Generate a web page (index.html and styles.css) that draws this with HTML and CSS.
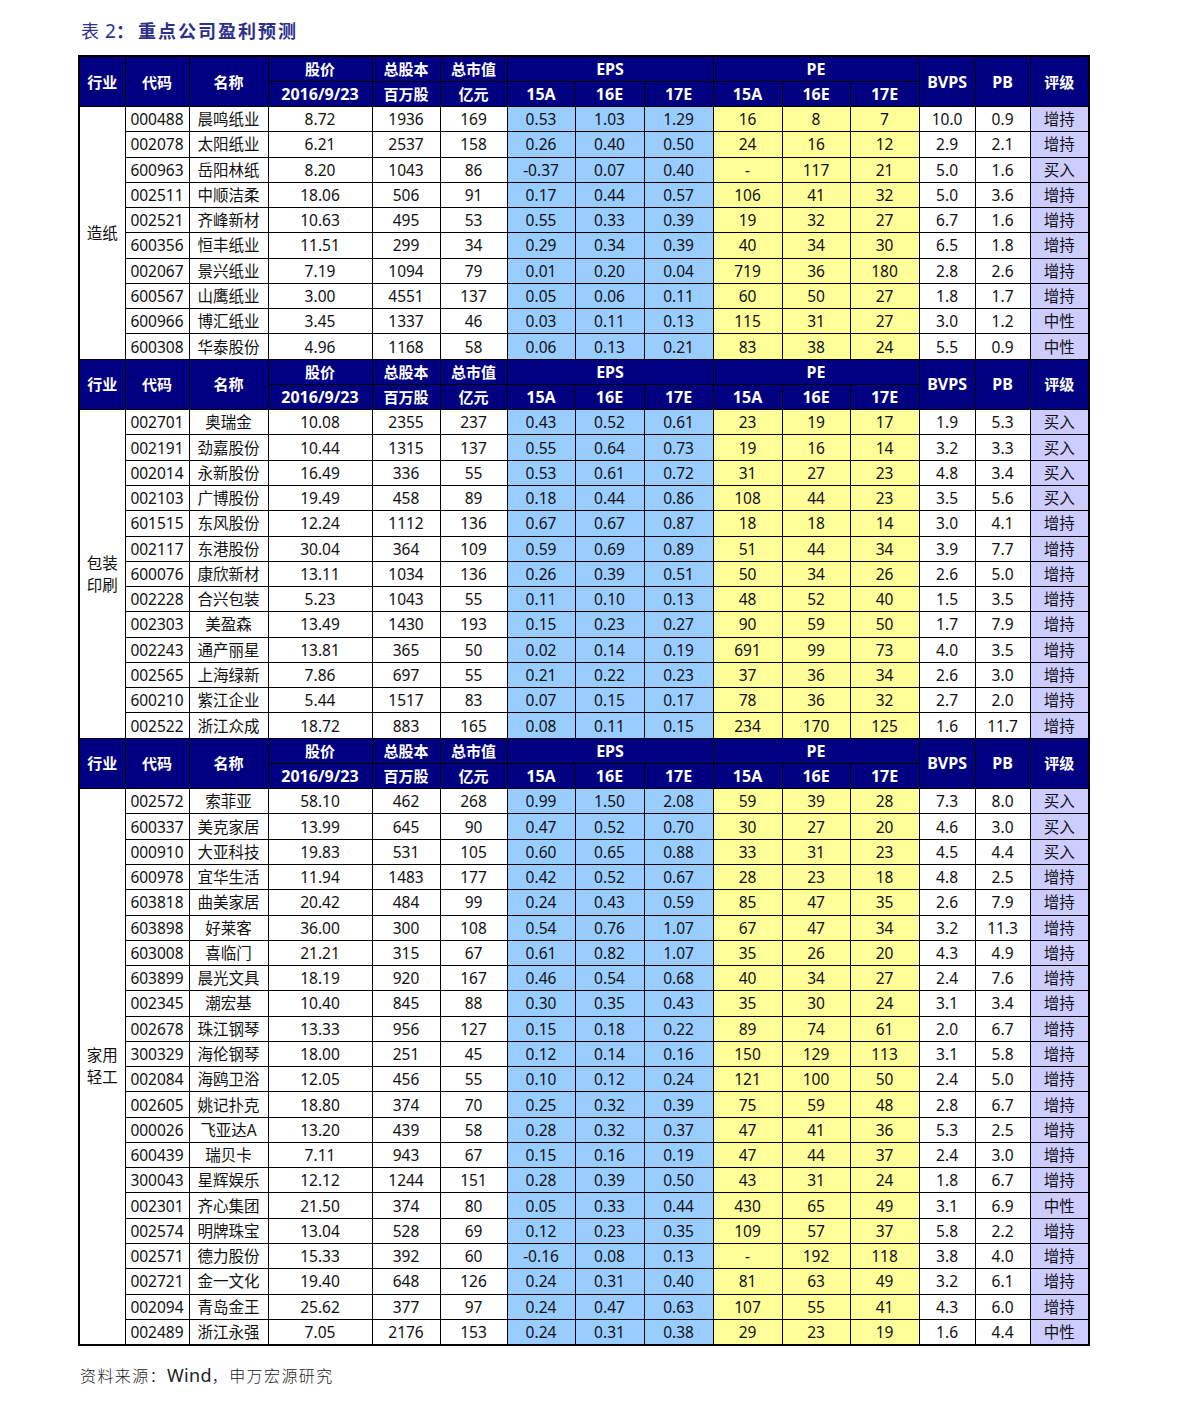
FILE: index.html
```html
<!DOCTYPE html>
<html lang="zh-CN">
<head>
<meta charset="utf-8">
<title>重点公司盈利预测</title>
<link rel="stylesheet" href="styles.css">
</head>
<body>
<div class="page">
  <div class="title"><span class="t-light">表</span> <span class="t-num">2</span><span class="t-colon">：</span><span class="t-main">重点公司盈利预测</span></div>
  <table class="tbl">
    <colgroup>
      <col class="w46"><col class="w64"><col class="w79"><col class="w104"><col class="w68"><col class="w67">
      <col class="w68"><col class="w69"><col class="w69"><col class="w69"><col class="w68"><col class="w69">
      <col class="w56"><col class="w55"><col class="w59">
    </colgroup>
    <tbody>
      <tr class="hd"><th rowspan="2">行业</th><th rowspan="2">代码</th><th rowspan="2">名称</th><th>股价</th><th>总股本</th><th>总市值</th><th colspan="3" class="lt">EPS</th><th colspan="3" class="lt">PE</th><th rowspan="2" class="lt">BVPS</th><th rowspan="2" class="lt">PB</th><th rowspan="2">评级</th></tr>
      <tr class="hd"><th class="lt">2016/9/23</th><th>百万股</th><th>亿元</th><th class="lt">15A</th><th class="lt">16E</th><th class="lt">17E</th><th class="lt">15A</th><th class="lt">16E</th><th class="lt">17E</th></tr>
      <tr><td class="ind" rowspan="10">造纸</td><td>000488</td><td>晨鸣纸业</td><td>8.72</td><td>1936</td><td>169</td><td class="e">0.53</td><td class="e">1.03</td><td class="e">1.29</td><td class="p">16</td><td class="p">8</td><td class="p">7</td><td>10.0</td><td>0.9</td><td class="r">增持</td></tr>
      <tr><td>002078</td><td>太阳纸业</td><td>6.21</td><td>2537</td><td>158</td><td class="e">0.26</td><td class="e">0.40</td><td class="e">0.50</td><td class="p">24</td><td class="p">16</td><td class="p">12</td><td>2.9</td><td>2.1</td><td class="r">增持</td></tr>
      <tr><td>600963</td><td>岳阳林纸</td><td>8.20</td><td>1043</td><td>86</td><td class="e">-0.37</td><td class="e">0.07</td><td class="e">0.40</td><td class="p">-</td><td class="p">117</td><td class="p">21</td><td>5.0</td><td>1.6</td><td class="r">买入</td></tr>
      <tr><td>002511</td><td>中顺洁柔</td><td>18.06</td><td>506</td><td>91</td><td class="e">0.17</td><td class="e">0.44</td><td class="e">0.57</td><td class="p">106</td><td class="p">41</td><td class="p">32</td><td>5.0</td><td>3.6</td><td class="r">增持</td></tr>
      <tr><td>002521</td><td>齐峰新材</td><td>10.63</td><td>495</td><td>53</td><td class="e">0.55</td><td class="e">0.33</td><td class="e">0.39</td><td class="p">19</td><td class="p">32</td><td class="p">27</td><td>6.7</td><td>1.6</td><td class="r">增持</td></tr>
      <tr><td>600356</td><td>恒丰纸业</td><td>11.51</td><td>299</td><td>34</td><td class="e">0.29</td><td class="e">0.34</td><td class="e">0.39</td><td class="p">40</td><td class="p">34</td><td class="p">30</td><td>6.5</td><td>1.8</td><td class="r">增持</td></tr>
      <tr><td>002067</td><td>景兴纸业</td><td>7.19</td><td>1094</td><td>79</td><td class="e">0.01</td><td class="e">0.20</td><td class="e">0.04</td><td class="p">719</td><td class="p">36</td><td class="p">180</td><td>2.8</td><td>2.6</td><td class="r">增持</td></tr>
      <tr><td>600567</td><td>山鹰纸业</td><td>3.00</td><td>4551</td><td>137</td><td class="e">0.05</td><td class="e">0.06</td><td class="e">0.11</td><td class="p">60</td><td class="p">50</td><td class="p">27</td><td>1.8</td><td>1.7</td><td class="r">增持</td></tr>
      <tr><td>600966</td><td>博汇纸业</td><td>3.45</td><td>1337</td><td>46</td><td class="e">0.03</td><td class="e">0.11</td><td class="e">0.13</td><td class="p">115</td><td class="p">31</td><td class="p">27</td><td>3.0</td><td>1.2</td><td class="r">中性</td></tr>
      <tr><td>600308</td><td>华泰股份</td><td>4.96</td><td>1168</td><td>58</td><td class="e">0.06</td><td class="e">0.13</td><td class="e">0.21</td><td class="p">83</td><td class="p">38</td><td class="p">24</td><td>5.5</td><td>0.9</td><td class="r">中性</td></tr>

      <tr class="hd"><th rowspan="2">行业</th><th rowspan="2">代码</th><th rowspan="2">名称</th><th>股价</th><th>总股本</th><th>总市值</th><th colspan="3" class="lt">EPS</th><th colspan="3" class="lt">PE</th><th rowspan="2" class="lt">BVPS</th><th rowspan="2" class="lt">PB</th><th rowspan="2">评级</th></tr>
      <tr class="hd"><th class="lt">2016/9/23</th><th>百万股</th><th>亿元</th><th class="lt">15A</th><th class="lt">16E</th><th class="lt">17E</th><th class="lt">15A</th><th class="lt">16E</th><th class="lt">17E</th></tr>
      <tr><td class="ind" rowspan="13">包装<br>印刷</td><td>002701</td><td>奥瑞金</td><td>10.08</td><td>2355</td><td>237</td><td class="e">0.43</td><td class="e">0.52</td><td class="e">0.61</td><td class="p">23</td><td class="p">19</td><td class="p">17</td><td>1.9</td><td>5.3</td><td class="r">买入</td></tr>
      <tr><td>002191</td><td>劲嘉股份</td><td>10.44</td><td>1315</td><td>137</td><td class="e">0.55</td><td class="e">0.64</td><td class="e">0.73</td><td class="p">19</td><td class="p">16</td><td class="p">14</td><td>3.2</td><td>3.3</td><td class="r">买入</td></tr>
      <tr><td>002014</td><td>永新股份</td><td>16.49</td><td>336</td><td>55</td><td class="e">0.53</td><td class="e">0.61</td><td class="e">0.72</td><td class="p">31</td><td class="p">27</td><td class="p">23</td><td>4.8</td><td>3.4</td><td class="r">买入</td></tr>
      <tr><td>002103</td><td>广博股份</td><td>19.49</td><td>458</td><td>89</td><td class="e">0.18</td><td class="e">0.44</td><td class="e">0.86</td><td class="p">108</td><td class="p">44</td><td class="p">23</td><td>3.5</td><td>5.6</td><td class="r">买入</td></tr>
      <tr><td>601515</td><td>东风股份</td><td>12.24</td><td>1112</td><td>136</td><td class="e">0.67</td><td class="e">0.67</td><td class="e">0.87</td><td class="p">18</td><td class="p">18</td><td class="p">14</td><td>3.0</td><td>4.1</td><td class="r">增持</td></tr>
      <tr><td>002117</td><td>东港股份</td><td>30.04</td><td>364</td><td>109</td><td class="e">0.59</td><td class="e">0.69</td><td class="e">0.89</td><td class="p">51</td><td class="p">44</td><td class="p">34</td><td>3.9</td><td>7.7</td><td class="r">增持</td></tr>
      <tr><td>600076</td><td>康欣新材</td><td>13.11</td><td>1034</td><td>136</td><td class="e">0.26</td><td class="e">0.39</td><td class="e">0.51</td><td class="p">50</td><td class="p">34</td><td class="p">26</td><td>2.6</td><td>5.0</td><td class="r">增持</td></tr>
      <tr><td>002228</td><td>合兴包装</td><td>5.23</td><td>1043</td><td>55</td><td class="e">0.11</td><td class="e">0.10</td><td class="e">0.13</td><td class="p">48</td><td class="p">52</td><td class="p">40</td><td>1.5</td><td>3.5</td><td class="r">增持</td></tr>
      <tr><td>002303</td><td>美盈森</td><td>13.49</td><td>1430</td><td>193</td><td class="e">0.15</td><td class="e">0.23</td><td class="e">0.27</td><td class="p">90</td><td class="p">59</td><td class="p">50</td><td>1.7</td><td>7.9</td><td class="r">增持</td></tr>
      <tr><td>002243</td><td>通产丽星</td><td>13.81</td><td>365</td><td>50</td><td class="e">0.02</td><td class="e">0.14</td><td class="e">0.19</td><td class="p">691</td><td class="p">99</td><td class="p">73</td><td>4.0</td><td>3.5</td><td class="r">增持</td></tr>
      <tr><td>002565</td><td>上海绿新</td><td>7.86</td><td>697</td><td>55</td><td class="e">0.21</td><td class="e">0.22</td><td class="e">0.23</td><td class="p">37</td><td class="p">36</td><td class="p">34</td><td>2.6</td><td>3.0</td><td class="r">增持</td></tr>
      <tr><td>600210</td><td>紫江企业</td><td>5.44</td><td>1517</td><td>83</td><td class="e">0.07</td><td class="e">0.15</td><td class="e">0.17</td><td class="p">78</td><td class="p">36</td><td class="p">32</td><td>2.7</td><td>2.0</td><td class="r">增持</td></tr>
      <tr><td>002522</td><td>浙江众成</td><td>18.72</td><td>883</td><td>165</td><td class="e">0.08</td><td class="e">0.11</td><td class="e">0.15</td><td class="p">234</td><td class="p">170</td><td class="p">125</td><td>1.6</td><td>11.7</td><td class="r">增持</td></tr>

      <tr class="hd"><th rowspan="2">行业</th><th rowspan="2">代码</th><th rowspan="2">名称</th><th>股价</th><th>总股本</th><th>总市值</th><th colspan="3" class="lt">EPS</th><th colspan="3" class="lt">PE</th><th rowspan="2" class="lt">BVPS</th><th rowspan="2" class="lt">PB</th><th rowspan="2">评级</th></tr>
      <tr class="hd"><th class="lt">2016/9/23</th><th>百万股</th><th>亿元</th><th class="lt">15A</th><th class="lt">16E</th><th class="lt">17E</th><th class="lt">15A</th><th class="lt">16E</th><th class="lt">17E</th></tr>
      <tr><td class="ind" rowspan="22">家用<br>轻工</td><td>002572</td><td>索菲亚</td><td>58.10</td><td>462</td><td>268</td><td class="e">0.99</td><td class="e">1.50</td><td class="e">2.08</td><td class="p">59</td><td class="p">39</td><td class="p">28</td><td>7.3</td><td>8.0</td><td class="r">买入</td></tr>
      <tr><td>600337</td><td>美克家居</td><td>13.99</td><td>645</td><td>90</td><td class="e">0.47</td><td class="e">0.52</td><td class="e">0.70</td><td class="p">30</td><td class="p">27</td><td class="p">20</td><td>4.6</td><td>3.0</td><td class="r">买入</td></tr>
      <tr><td>000910</td><td>大亚科技</td><td>19.83</td><td>531</td><td>105</td><td class="e">0.60</td><td class="e">0.65</td><td class="e">0.88</td><td class="p">33</td><td class="p">31</td><td class="p">23</td><td>4.5</td><td>4.4</td><td class="r">买入</td></tr>
      <tr><td>600978</td><td>宜华生活</td><td>11.94</td><td>1483</td><td>177</td><td class="e">0.42</td><td class="e">0.52</td><td class="e">0.67</td><td class="p">28</td><td class="p">23</td><td class="p">18</td><td>4.8</td><td>2.5</td><td class="r">增持</td></tr>
      <tr><td>603818</td><td>曲美家居</td><td>20.42</td><td>484</td><td>99</td><td class="e">0.24</td><td class="e">0.43</td><td class="e">0.59</td><td class="p">85</td><td class="p">47</td><td class="p">35</td><td>2.6</td><td>7.9</td><td class="r">增持</td></tr>
      <tr><td>603898</td><td>好莱客</td><td>36.00</td><td>300</td><td>108</td><td class="e">0.54</td><td class="e">0.76</td><td class="e">1.07</td><td class="p">67</td><td class="p">47</td><td class="p">34</td><td>3.2</td><td>11.3</td><td class="r">增持</td></tr>
      <tr><td>603008</td><td>喜临门</td><td>21.21</td><td>315</td><td>67</td><td class="e">0.61</td><td class="e">0.82</td><td class="e">1.07</td><td class="p">35</td><td class="p">26</td><td class="p">20</td><td>4.3</td><td>4.9</td><td class="r">增持</td></tr>
      <tr><td>603899</td><td>晨光文具</td><td>18.19</td><td>920</td><td>167</td><td class="e">0.46</td><td class="e">0.54</td><td class="e">0.68</td><td class="p">40</td><td class="p">34</td><td class="p">27</td><td>2.4</td><td>7.6</td><td class="r">增持</td></tr>
      <tr><td>002345</td><td>潮宏基</td><td>10.40</td><td>845</td><td>88</td><td class="e">0.30</td><td class="e">0.35</td><td class="e">0.43</td><td class="p">35</td><td class="p">30</td><td class="p">24</td><td>3.1</td><td>3.4</td><td class="r">增持</td></tr>
      <tr><td>002678</td><td>珠江钢琴</td><td>13.33</td><td>956</td><td>127</td><td class="e">0.15</td><td class="e">0.18</td><td class="e">0.22</td><td class="p">89</td><td class="p">74</td><td class="p">61</td><td>2.0</td><td>6.7</td><td class="r">增持</td></tr>
      <tr><td>300329</td><td>海伦钢琴</td><td>18.00</td><td>251</td><td>45</td><td class="e">0.12</td><td class="e">0.14</td><td class="e">0.16</td><td class="p">150</td><td class="p">129</td><td class="p">113</td><td>3.1</td><td>5.8</td><td class="r">增持</td></tr>
      <tr><td>002084</td><td>海鸥卫浴</td><td>12.05</td><td>456</td><td>55</td><td class="e">0.10</td><td class="e">0.12</td><td class="e">0.24</td><td class="p">121</td><td class="p">100</td><td class="p">50</td><td>2.4</td><td>5.0</td><td class="r">增持</td></tr>
      <tr><td>002605</td><td>姚记扑克</td><td>18.80</td><td>374</td><td>70</td><td class="e">0.25</td><td class="e">0.32</td><td class="e">0.39</td><td class="p">75</td><td class="p">59</td><td class="p">48</td><td>2.8</td><td>6.7</td><td class="r">增持</td></tr>
      <tr><td>000026</td><td>飞亚达A</td><td>13.20</td><td>439</td><td>58</td><td class="e">0.28</td><td class="e">0.32</td><td class="e">0.37</td><td class="p">47</td><td class="p">41</td><td class="p">36</td><td>5.3</td><td>2.5</td><td class="r">增持</td></tr>
      <tr><td>600439</td><td>瑞贝卡</td><td>7.11</td><td>943</td><td>67</td><td class="e">0.15</td><td class="e">0.16</td><td class="e">0.19</td><td class="p">47</td><td class="p">44</td><td class="p">37</td><td>2.4</td><td>3.0</td><td class="r">增持</td></tr>
      <tr><td>300043</td><td>星辉娱乐</td><td>12.12</td><td>1244</td><td>151</td><td class="e">0.28</td><td class="e">0.39</td><td class="e">0.50</td><td class="p">43</td><td class="p">31</td><td class="p">24</td><td>1.8</td><td>6.7</td><td class="r">增持</td></tr>
      <tr><td>002301</td><td>齐心集团</td><td>21.50</td><td>374</td><td>80</td><td class="e">0.05</td><td class="e">0.33</td><td class="e">0.44</td><td class="p">430</td><td class="p">65</td><td class="p">49</td><td>3.1</td><td>6.9</td><td class="r">中性</td></tr>
      <tr><td>002574</td><td>明牌珠宝</td><td>13.04</td><td>528</td><td>69</td><td class="e">0.12</td><td class="e">0.23</td><td class="e">0.35</td><td class="p">109</td><td class="p">57</td><td class="p">37</td><td>5.8</td><td>2.2</td><td class="r">增持</td></tr>
      <tr><td>002571</td><td>德力股份</td><td>15.33</td><td>392</td><td>60</td><td class="e">-0.16</td><td class="e">0.08</td><td class="e">0.13</td><td class="p">-</td><td class="p">192</td><td class="p">118</td><td>3.8</td><td>4.0</td><td class="r">增持</td></tr>
      <tr><td>002721</td><td>金一文化</td><td>19.40</td><td>648</td><td>126</td><td class="e">0.24</td><td class="e">0.31</td><td class="e">0.40</td><td class="p">81</td><td class="p">63</td><td class="p">49</td><td>3.2</td><td>6.1</td><td class="r">增持</td></tr>
      <tr><td>002094</td><td>青岛金王</td><td>25.62</td><td>377</td><td>97</td><td class="e">0.24</td><td class="e">0.47</td><td class="e">0.63</td><td class="p">107</td><td class="p">55</td><td class="p">41</td><td>4.3</td><td>6.0</td><td class="r">增持</td></tr>
      <tr><td>002489</td><td>浙江永强</td><td>7.05</td><td>2176</td><td>153</td><td class="e">0.24</td><td class="e">0.31</td><td class="e">0.38</td><td class="p">29</td><td class="p">23</td><td class="p">19</td><td>1.6</td><td>4.4</td><td class="r">中性</td></tr>
    </tbody>
  </table>
  <div class="source"><span class="src-cn">资料来源：</span><span class="src-en">Wind</span><span class="src-cn">，申万宏源研究</span></div>
</div>
</body>
</html>
```

FILE: styles.css
```css
html, body {
  margin: 0;
  padding: 0;
  background: #ffffff;
}

.page {
  padding: 18px 0 0 78px;
  font-family: "Noto Sans", "Noto Sans CJK SC", sans-serif;
  color: #111111;
}

.title {
  height: 24px;
  line-height: 24px;
  font-size: 18px;
  color: #2c2f8c;
  font-family: "Noto Sans CJK SC", sans-serif;
  padding-left: 3px;
}

.t-light {
  font-weight: 400;
}

.t-num {
  font-family: "Noto Sans", sans-serif;
  font-size: 19px;
  font-weight: 400;
  margin-left: 2px;
}

.t-colon {
  font-weight: 700;
  margin-right: 4px;
}

.t-main {
  font-weight: 700;
  letter-spacing: 2px;
}

.tbl {
  margin-top: 13px;
  width: 1010px;
  table-layout: fixed;
  border-collapse: collapse;
  border: 2px solid #000000;
  font-size: 15.5px;
}

.w46 { width: 46px; }
.w64 { width: 64px; }
.w79 { width: 79px; }
.w104 { width: 104px; }
.w68 { width: 68px; }
.w67 { width: 67px; }
.w69 { width: 69px; }
.w56 { width: 56px; }
.w55 { width: 55px; }
.w59 { width: 59px; }

.tbl tr {
  height: 25.27px;
}

.tbl th,
.tbl td {
  border: 1px solid #000000;
  padding: 0;
  text-align: center;
  vertical-align: middle;
  white-space: nowrap;
  line-height: 18px;
}

.tbl th {
  background: #000080;
  color: #ffffff;
  font-weight: 700;
  font-size: 15px;
}

.tbl th.lt {
  font-size: 16px;
}

.tbl td.ind {
  line-height: 22px;
}

.tbl td.e {
  background: #99ccff;
}

.tbl td.p {
  background: #ffff99;
}

.tbl td.r {
  background: #ccccff;
}

.source {
  margin-top: 18px;
  line-height: 22px;
  font-size: 16px;
  color: #222222;
  padding-left: 2px;
}

.src-cn {
  font-family: "Noto Sans CJK SC", sans-serif;
  font-weight: 300;
  letter-spacing: 1.4px;
}

.src-en {
  font-family: "Noto Sans", sans-serif;
  font-size: 18px;
  letter-spacing: 0.3px;
}
```
